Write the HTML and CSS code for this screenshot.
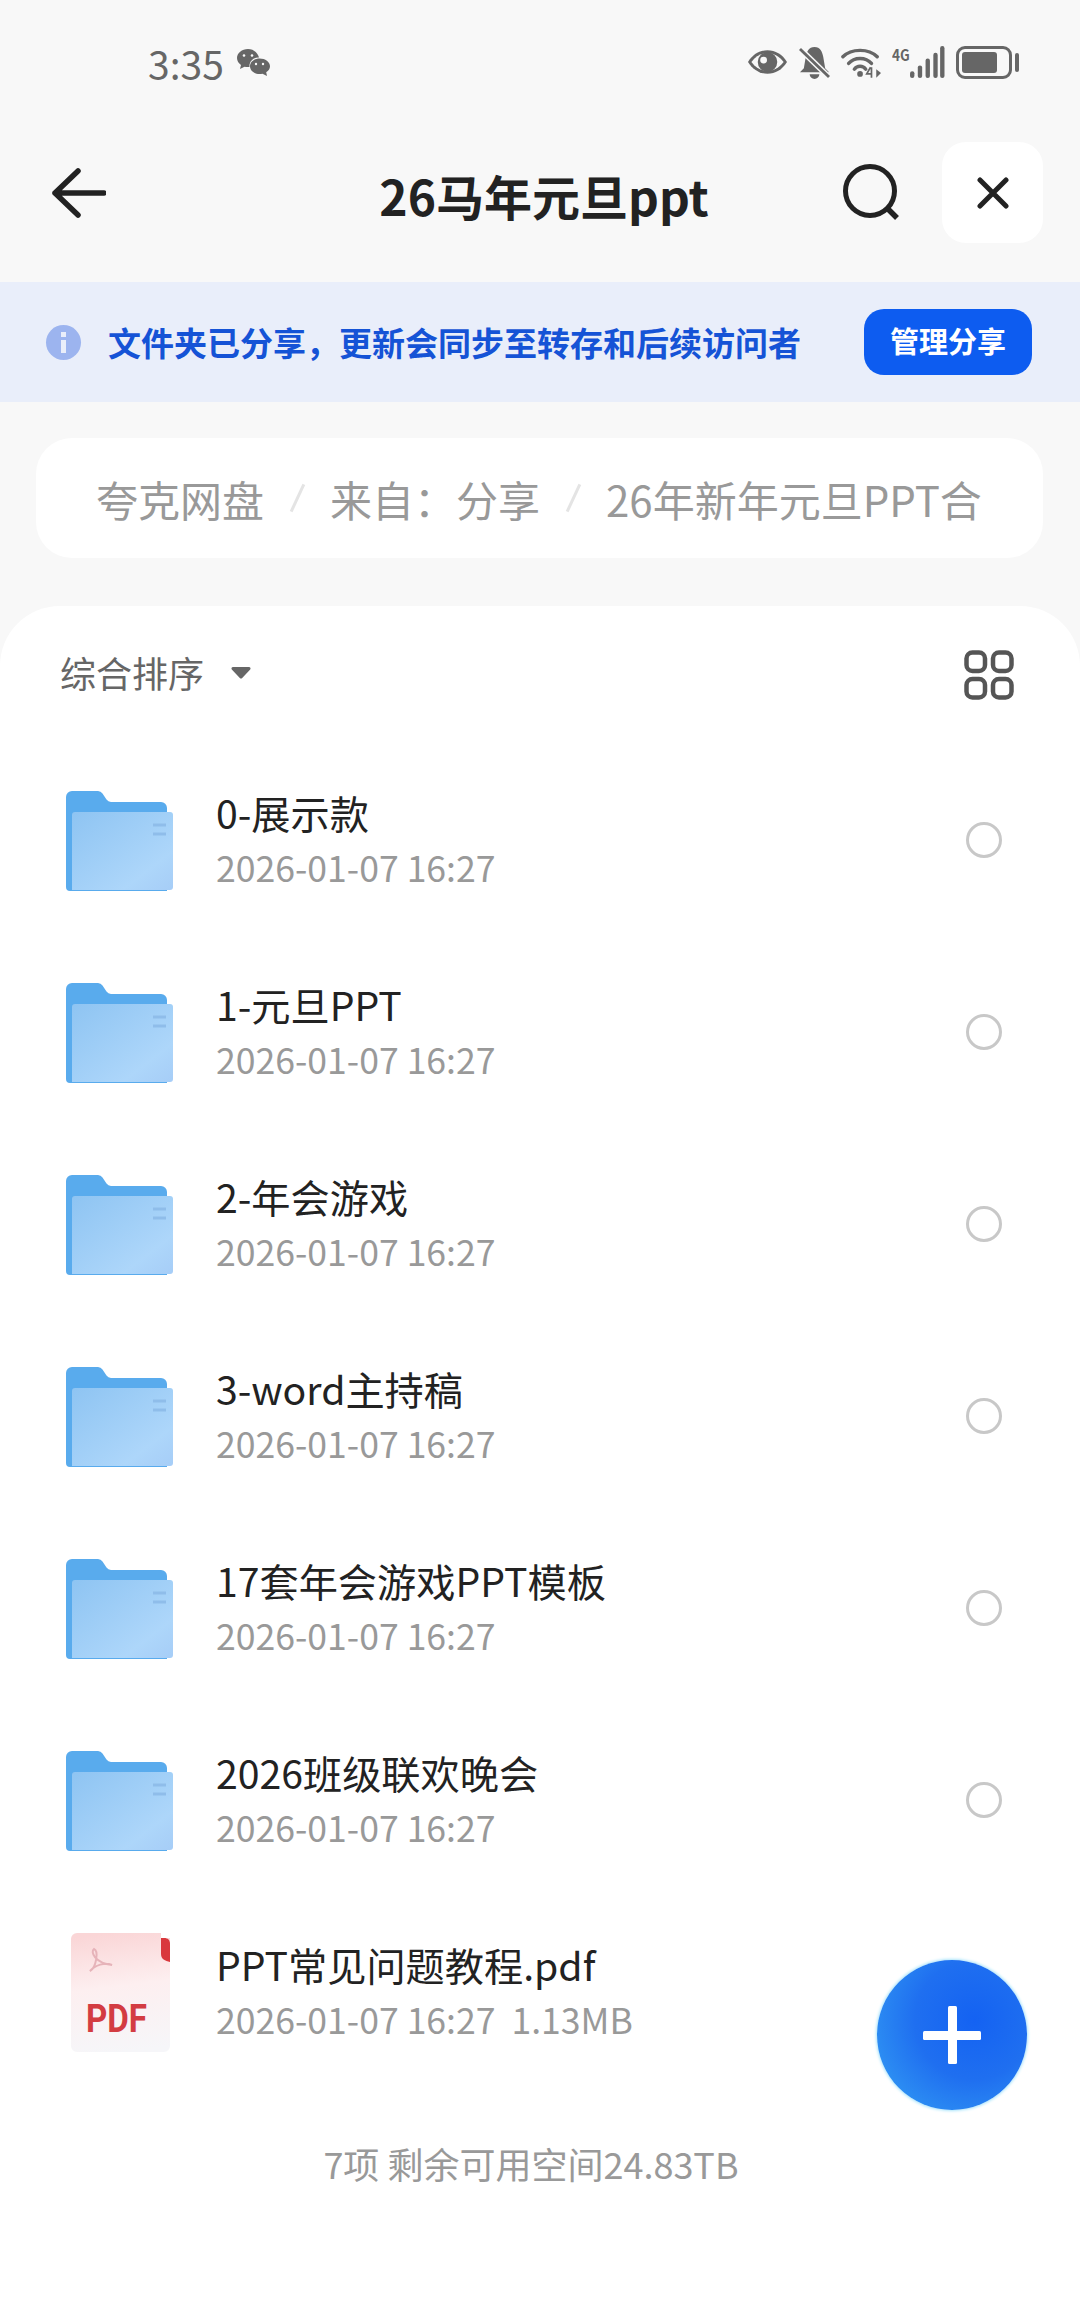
FILE: index.html
```html
<!DOCTYPE html>
<html lang="zh-CN">
<head>
    <meta charset="UTF-8">
    <meta name="viewport" content="width=device-width, initial-scale=1.0">
    <title>26马年元旦ppt</title>
    <link rel="stylesheet" href="styles.css">
</head>
<body>
    <svg class="defs" width="0" height="0">
        <defs>
            <linearGradient id="folderFront" x1="0" y1="0" x2="1" y2="1">
                <stop offset="0" stop-color="#8ec4f2"/>
                <stop offset="0.75" stop-color="#add6fa"/>
                <stop offset="1" stop-color="#a6cdf7"/>
            </linearGradient>
            <linearGradient id="pdfPage" x1="0.4" y1="0" x2="0.5" y2="1">
                <stop offset="0" stop-color="#fad6d7"/>
                <stop offset="0.45" stop-color="#fdeff0"/>
                <stop offset="1" stop-color="#f6f6f9"/>
            </linearGradient>
            <symbol id="folder" viewBox="0 0 108 100">
                <path d="M0 6a6 6 0 0 1 6-6h26a6 6 0 0 1 4.500 2.500l4 6a6 6 0 0 0 4.500 2.500h50a6 6 0 0 1 6 6v83H4a4 4 0 0 1-4-4z" fill="#59abed"/>
                <path d="M6 24a3 3 0 0 1 3-3h95a3 3 0 0 1 3 3v72a3 3 0 0 1-3 3H6z" fill="url(#folderFront)"/>
                <path d="M87 34h13M87 43h13" stroke="#8fbdea" stroke-width="3"/>
            </symbol>
        </defs>
    </svg>

    <!-- Status bar -->
    <div class="status-bar">
        <div class="status-left">
            <span class="clock">3:35</span>
            <svg class="wechat" viewBox="0 0 34 30" width="34" height="30">
                <path d="M12 1C5.900 1 1 5 1 10c0 2.800 1.600 5.300 4 7l-1 4 4.500-2.300c1 .3 2.200.4 3.500.4.500 0 1 0 1.500-.1C13 13 18 9 23 9.500 21.800 4.600 17.300 1 12 1z" fill="#666"/>
                <path d="M23.500 10.500C18.300 10.500 14 14 14 18.300s4.300 7.800 9.500 7.800c1 0 2-.1 3-.4L31 28l-.8-3.700c2.300-1.400 3.800-3.600 3.800-6 0-4.300-4.700-7.800-10.500-7.800z" fill="#666"/>
                <circle cx="8" cy="7.500" r="1.300" fill="#fafafa"/><circle cx="16" cy="7.500" r="1.300" fill="#fafafa"/>
                <circle cx="20" cy="16" r="1.200" fill="#fafafa"/><circle cx="27" cy="16" r="1.200" fill="#fafafa"/>
            </svg>
        </div>
        <div class="status-right">
            <svg viewBox="0 0 42 28" width="41" height="28"><path d="M1 14C6 6 13 2 21 2s15 4 20 12c-5 8-12 12-20 12S6 22 1 14z" fill="#666"/><path d="M4.500 14C9 8 14.500 5 21 5c6.500 0 12 3 16.500 9-4.500 6-10 9-16.500 9-6.500 0-12-3-16.500-9z" fill="#f8f8f8"/><circle cx="21" cy="14" r="10" fill="#666"/><circle cx="17" cy="12" r="3.500" fill="#f8f8f8"/></svg>
            <svg viewBox="0 0 32 34" width="31" height="33"><path d="M16 1c6 0 8 5 9 10l2 12 4 4H1l4-4 2-12c1-5 3-10 9-10zM11 29h10a5 5 0 0 1-10 0z" fill="#666"/><path d="M1 3l30 29" stroke="#f8f8f8" stroke-width="6"/><path d="M1 3l30 29" stroke="#666" stroke-width="3"/></svg>
            <svg viewBox="0 0 42 34" width="40" height="33" fill="none" stroke="#666" stroke-width="3.600" stroke-linecap="round"><path d="M2 11C11 2 29 2 38 11"/><path d="M8 18C14 11 26 11 32 18"/><path d="M14 24c3-4 9-4 12 0"/><circle cx="20" cy="29" r="3" fill="#666" stroke="none"/><path d="M31 22l-4 7h5m0-7v11" stroke-width="1.800" stroke-linecap="butt"/><path d="M37 24v9l5-5z" fill="#666" stroke="none"/></svg>
            <div class="signal">
                <span class="net">4G</span>
                <svg viewBox="0 0 36 34" width="35" height="33" fill="#666"><rect x="0" y="26" width="4.500" height="7" rx="2.200"/><rect x="8" y="20" width="4.500" height="13" rx="2.200"/><rect x="16" y="13" width="4.500" height="20" rx="2.200"/><rect x="24" y="7" width="4.500" height="26" rx="2.200"/><rect x="31" y="0" width="4.500" height="33" rx="2.200"/></svg>
            </div>
            <div class="battery"><div class="battery-body"><div class="battery-level"></div></div><div class="battery-tip"></div></div>
        </div>
    </div>

    <!-- Top nav -->
    <div class="nav">
        <svg class="back" viewBox="0 0 54 50" width="54" height="50" fill="none" stroke="#222" stroke-width="5.500" stroke-linecap="round" stroke-linejoin="round"><path d="M26 3L3 25l23 22M3 25h49"/></svg>
        <h1>26马年元旦ppt</h1>
        <div class="nav-actions">
            <svg class="search" viewBox="0 0 58 58" width="58" height="58" fill="none" stroke="#222" stroke-width="5"><circle cx="27" cy="27" r="24.500"/><path d="M45 45l9 9" stroke-width="5.500"/></svg>
            <div class="close">
                <svg viewBox="0 0 32 32" width="32" height="32" fill="none" stroke="#222" stroke-width="5" stroke-linecap="round"><path d="M3 3l26 26M29 3L3 29"/></svg>
            </div>
        </div>
    </div>

    <!-- Share notice -->
    <div class="notice">
        <div class="notice-icon"><span class="i-dot"></span><span class="i-bar"></span></div>
        <p>文件夹已分享，更新会同步至转存和后续访问者</p>
        <div class="manage">管理分享</div>
    </div>

    <!-- Breadcrumb -->
    <div class="crumbs">
        <span>夸克网盘</span>
        <i class="slash"></i>
        <span>来自：分享</span>
        <i class="slash"></i>
        <span>26年新年元旦PPT合</span>
    </div>

    <!-- File list -->
    <div class="panel">
        <div class="sort-row">
            <span class="sort">综合排序</span>
            <svg class="caret" viewBox="0 0 20 13" width="20" height="13"><path d="M2 1h16a1.500 1.500 0 0 1 1.200 2.400l-8 8.500a1.600 1.600 0 0 1-2.400 0l-8-8.500A1.500 1.500 0 0 1 2 1z" fill="#666"/></svg>
            <svg class="grid-btn" viewBox="0 0 50 50" width="50" height="50" fill="none" stroke="#555" stroke-width="4.500"><rect x="2.500" y="2.500" width="18.500" height="18.500" rx="6"/><rect x="29" y="2.500" width="18.500" height="18.500" rx="6"/><rect x="2.500" y="29" width="18.500" height="18.500" rx="6"/><rect x="29" y="29" width="18.500" height="18.500" rx="6"/></svg>
        </div>

        <div class="row">
            <svg class="thumb"><use href="#folder"/></svg>
            <div class="info"><div class="name">0-展示款</div><div class="date">2026-01-07 16:27</div></div>
            <span class="radio"></span>
        </div>
        <div class="row">
            <svg class="thumb"><use href="#folder"/></svg>
            <div class="info"><div class="name">1-元旦PPT</div><div class="date">2026-01-07 16:27</div></div>
            <span class="radio"></span>
        </div>
        <div class="row">
            <svg class="thumb"><use href="#folder"/></svg>
            <div class="info"><div class="name">2-年会游戏</div><div class="date">2026-01-07 16:27</div></div>
            <span class="radio"></span>
        </div>
        <div class="row">
            <svg class="thumb"><use href="#folder"/></svg>
            <div class="info"><div class="name">3-word主持稿</div><div class="date">2026-01-07 16:27</div></div>
            <span class="radio"></span>
        </div>
        <div class="row">
            <svg class="thumb"><use href="#folder"/></svg>
            <div class="info"><div class="name">17套年会游戏PPT模板</div><div class="date">2026-01-07 16:27</div></div>
            <span class="radio"></span>
        </div>
        <div class="row">
            <svg class="thumb"><use href="#folder"/></svg>
            <div class="info"><div class="name">2026班级联欢晚会</div><div class="date">2026-01-07 16:27</div></div>
            <span class="radio"></span>
        </div>
        <div class="row">
            <svg class="thumb pdf" viewBox="0 0 108 122">
                <path d="M5 8a6 6 0 0 1 6-6h84v5h9v108a6 6 0 0 1-6 6H11a6 6 0 0 1-6-6z" fill="url(#pdfPage)"/>
                <path d="M95 7h3c4 0 6 2 6 6v18c-5-1-9-3-9-8z" fill="#d9383d"/>
                <path d="M24 40c6-3 9-20 4-22-4 3 1 14 18 16-7-3-17 0-22 6z" fill="none" stroke="#e6b3b9" stroke-width="2"/>
                <text x="20" y="101" class="pdf-label" textLength="61" lengthAdjust="spacingAndGlyphs">PDF</text>
            </svg>
            <div class="info"><div class="name">PPT常见问题教程.pdf</div><div class="date">2026-01-07 16:27&nbsp;&nbsp;1.13MB</div></div>
        </div>

        <div class="summary">7项 剩余可用空间24.83TB</div>
    </div>

    <div class="fab">
        <svg viewBox="0 0 58 58" width="58" height="58" fill="#fff"><rect x="25" y="0" width="9" height="58" rx="1.500"/><rect x="0" y="25" width="58" height="9" rx="1.500"/></svg>
    </div>
</body>
</html>
```

FILE: styles.css
```css
* {
    margin: 0;
    padding: 0;
    box-sizing: border-box;
}
html, body {
    width: 1080px;
    height: 2310px;
    overflow: hidden;
}
body {
    position: relative;
    display: flex;
    flex-direction: column;
    background: #f8f8f8;
    color: #222;
    font-family: "Noto Sans CJK SC", sans-serif;
}
.defs {
    position: absolute;
}

/* status bar */
.status-bar {
    height: 126px;
    padding: 36px 61px 0 148px;
    display: flex;
    justify-content: space-between;
    align-items: flex-start;
}
.status-left {
    display: flex;
    align-items: center;
    gap: 12px;
}
.clock {
    font-size: 39px;
    line-height: 54px;
    color: #666;
}
.status-right {
    display: flex;
    align-items: center;
    gap: 11px;
    height: 52px;
}
.signal {
    display: flex;
    align-items: flex-end;
    height: 33px;
}
.net {
    width: 18px;
    font-size: 16px;
    font-weight: 700;
    line-height: 16px;
    color: #666;
    align-self: flex-start;
    white-space: nowrap;
    transform: scaleX(.85);
    transform-origin: left;
}
.battery {
    display: flex;
    align-items: center;
    gap: 3px;
}
.battery-body {
    width: 56px;
    height: 33px;
    border: 3.500px solid #666;
    border-radius: 9px;
    padding: 3px;
}
.battery-level {
    width: 35px;
    height: 100%;
    background: #666;
    border-radius: 3px;
}
.battery-tip {
    width: 4px;
    height: 19px;
    background: #666;
    border-radius: 2px;
}

/* nav */
.nav {
    height: 156px;
    display: grid;
    grid-template-columns: 1fr auto 1fr;
    align-items: center;
    padding: 0 37px 23px 45px;
}
.back {
    margin-left: 7px;
}
.nav h1 {
    font-size: 48px;
    line-height: 60px;
    font-weight: 700;
    margin-top: 5px;
}
.nav-actions {
    display: flex;
    align-items: center;
    justify-content: flex-end;
    gap: 41px;
}
.close {
    width: 101px;
    height: 101px;
    background: #fff;
    border-radius: 24px;
    display: flex;
    align-items: center;
    justify-content: center;
}

/* notice */
.notice {
    height: 120px;
    background: #e9eefa;
    display: flex;
    align-items: center;
    padding: 0 48px 0 46px;
}
.notice-icon {
    width: 35px;
    height: 35px;
    border-radius: 50%;
    background: #9cb4ef;
    display: flex;
    flex-direction: column;
    align-items: center;
    justify-content: center;
    gap: 3px;
}
.i-dot {
    width: 5px;
    height: 5px;
    background: #e9eefa;
}
.i-bar {
    width: 5px;
    height: 13px;
    background: #e9eefa;
}
.notice p {
    margin-left: 27px;
    flex: 1;
    font-size: 33px;
    font-weight: 700;
    color: #1553d6;
    white-space: nowrap;
}
.manage {
    width: 168px;
    height: 66px;
    background: #0d5cf0;
    border-radius: 20px;
    color: #fff;
    font-size: 29px;
    font-weight: 700;
    line-height: 62px;
    text-align: center;
}

/* breadcrumb */
.crumbs {
    margin: 36px 37px 0 36px;
    height: 120px;
    background: #fff;
    border-radius: 36px;
    padding-left: 60px;
    display: flex;
    align-items: center;
    font-size: 42px;
    color: #999;
    white-space: nowrap;
    overflow: hidden;
}
.slash {
    width: 3px;
    height: 30px;
    margin: 0 31.500px;
    background: #e4e4e4;
    transform: rotate(25deg);
}

/* list */
.panel {
    margin-top: 48px;
    flex: 1;
    background: #fff;
    border-radius: 60px 60px 0 0;
    padding: 0 0 0 60px;
}
.sort-row {
    height: 92px;
    margin: 20px 0 26px;
    display: flex;
    align-items: center;
    padding-right: 66px;
}
.sort {
    font-size: 36px;
    color: #666;
}
.caret {
    margin-left: 27px;
}
.grid-btn {
    margin-left: auto;
    margin-top: 6px;
}
.row {
    height: 192px;
    display: flex;
    align-items: center;
    padding-right: 78px;
}
.thumb {
    width: 108px;
    height: 100px;
    margin: 2px 0 0 6px;
    flex: none;
}
.thumb.pdf {
    height: 122px;
    margin-top: 0;
}
.pdf-label {
    font-family: Roboto, sans-serif;
    font-size: 39px;
    font-weight: 700;
    fill: #d33c42;
}
.info {
    margin-left: 42px;
    padding-bottom: 6px;
    flex: 1;
}
.name {
    font-size: 39.200px;
    line-height: 54px;
    color: #222;
}
.date {
    margin-top: 5px;
    font-size: 35.600px;
    line-height: 46px;
    color: #999;
}
.radio {
    width: 36px;
    height: 36px;
    border: 3px solid #c8c8c8;
    border-radius: 50%;
}
.summary {
    margin: 51px 0 0 -60px;
    padding-right: 18px;
    text-align: center;
    font-size: 36px;
    line-height: 48px;
    color: #999;
}

/* floating add button */
.fab {
    position: absolute;
    left: 877px;
    top: 1960px;
    width: 150px;
    height: 150px;
    border-radius: 50%;
    background: radial-gradient(circle at 65% 40%, #1462f2 0%, #1f6ff0 45%, #2a88f2 72%, #33a8f6 100%);
    box-shadow: 0 0 3px 1px #a8e4fb;
    display: flex;
    align-items: center;
    justify-content: center;
}
```
